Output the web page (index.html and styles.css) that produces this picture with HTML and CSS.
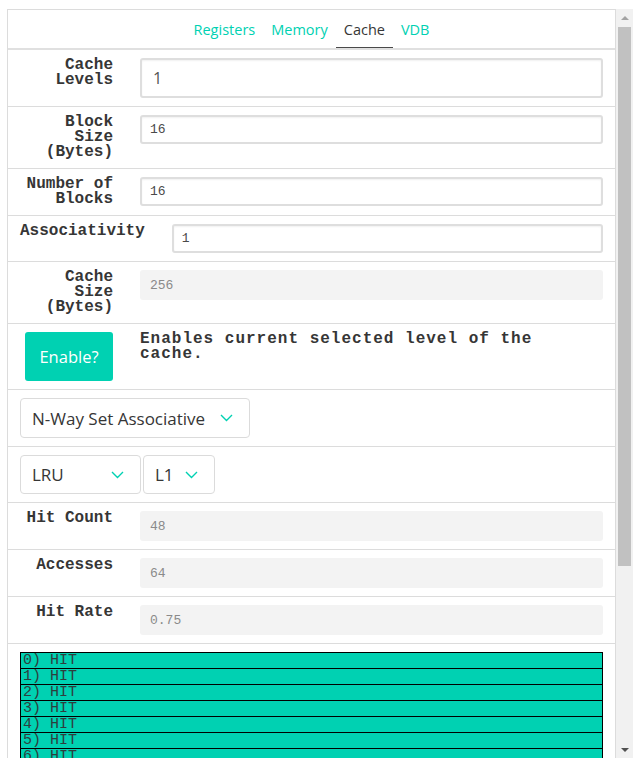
FILE: index.html
```html
<!DOCTYPE html>
<html>
<head>
<meta charset="utf-8">
<link rel="stylesheet" href="styles.css">
</head>
<body>
<div class="frame">
  <div class="panel">
    <nav class="tabs">
      <a class="tab">Registers</a>
      <a class="tab">Memory</a>
      <a class="tab active">Cache</a>
      <a class="tab">VDB</a>
    </nav>

    <div class="row">
      <div class="flabel">Cache Levels</div>
      <div class="fbody"><input class="inp inp-big" type="text" value="1"></div>
    </div>
    <div class="row">
      <div class="flabel">Block Size (Bytes)</div>
      <div class="fbody"><input class="inp" type="text" value="16"></div>
    </div>
    <div class="row">
      <div class="flabel">Number of Blocks</div>
      <div class="fbody"><input class="inp" type="text" value="16"></div>
    </div>
    <div class="row">
      <div class="flabel">Associativity</div>
      <div class="fbody"><input class="inp" type="text" value="1"></div>
    </div>
    <div class="row">
      <div class="flabel">Cache Size (Bytes)</div>
      <div class="fbody"><input class="inp inp-off" type="text" value="256" disabled></div>
    </div>
    <div class="row">
      <div class="flabel"><button class="btn">Enable?</button></div>
      <div class="fbody"><p class="desc">Enables current selected level of the cache.</p></div>
    </div>
    <div class="row row-sel">
      <div class="sel sel-type"><span>N-Way Set Associative</span><svg class="chev" width="13" height="8" viewBox="0 0 13 8"><polyline points="1,1 6.5,6.5 12,1" fill="none" stroke="#00d1b2" stroke-width="1.4"/></svg></div>
    </div>
    <div class="row row-sel">
      <div class="sel sel-policy"><span>LRU</span><svg class="chev" width="13" height="8" viewBox="0 0 13 8"><polyline points="1,1 6.5,6.5 12,1" fill="none" stroke="#00d1b2" stroke-width="1.4"/></svg></div>
      <div class="sel sel-level"><span>L1</span><svg class="chev" width="13" height="8" viewBox="0 0 13 8"><polyline points="1,1 6.5,6.5 12,1" fill="none" stroke="#00d1b2" stroke-width="1.4"/></svg></div>
    </div>
    <div class="row">
      <div class="flabel">Hit Count</div>
      <div class="fbody"><input class="inp inp-off" type="text" value="48" disabled></div>
    </div>
    <div class="row">
      <div class="flabel">Accesses</div>
      <div class="fbody"><input class="inp inp-off" type="text" value="64" disabled></div>
    </div>
    <div class="row">
      <div class="flabel">Hit Rate</div>
      <div class="fbody"><input class="inp inp-off" type="text" value="0.75" disabled></div>
    </div>
    <div class="row row-list">
      <div class="hits">
        <div class="hit">0) HIT</div>
        <div class="hit">1) HIT</div>
        <div class="hit">2) HIT</div>
        <div class="hit">3) HIT</div>
        <div class="hit">4) HIT</div>
        <div class="hit">5) HIT</div>
        <div class="hit">6) HIT</div>
      </div>
    </div>
  </div>
  <div class="scrollbar">
    <div class="sb-btn"><span class="arrow-up"></span></div>
    <div class="sb-track"><div class="sb-thumb"></div></div>
    <div class="sb-btn"><span class="arrow-down"></span></div>
  </div>
</div>
</body>
</html>
```
FILE: styles.css
```css
html, body {
  margin: 0;
  padding: 0;
  background: #fff;
}
body {
  padding: 9px 0 0 7px;
  font-family: "Open Sans", "Noto Sans", sans-serif;
  color: #363636;
}
.frame {
  display: flex;
  width: 626px;
  height: 749px;
}
.panel {
  flex: 1 1 auto;
  min-width: 0;
  overflow: hidden;
  border: 1px solid #dcdcdc;
  border-bottom: none;
}
.scrollbar {
  flex: 0 0 17px;
  display: flex;
  flex-direction: column;
  background: #f1f1f1;
}
.sb-btn {
  flex: 0 0 17px;
  display: flex;
  align-items: center;
  justify-content: center;
}
.arrow-up {
  width: 0;
  height: 0;
  border-left: 4px solid transparent;
  border-right: 4px solid transparent;
  border-bottom: 4px solid #a3a3a3;
}
.arrow-down {
  width: 0;
  height: 0;
  border-left: 4px solid transparent;
  border-right: 4px solid transparent;
  border-top: 4px solid #505050;
}
.sb-track {
  flex: 1 1 auto;
  padding: 1px 2px 0;
}
.sb-thumb {
  height: 539px;
  background: #c1c1c1;
}
.tabs {
  display: flex;
  justify-content: center;
  border-bottom: 2px solid #e0e0e0;
  height: 38px;
}
.tab {
  display: block;
  padding: 2px 8px 0;
  line-height: 36px;
  font-size: 14.5px;
  color: #00d1b2;
  box-sizing: border-box;
  height: 38px;
}
.tab.active {
  color: #363636;
  border-bottom: 1px solid #4a4a4a;
}
.row {
  display: flex;
  align-items: flex-start;
  gap: 27px;
  padding: 8px 12px;
  border-bottom: 1px solid #dcdcdc;
}
.flabel {
  flex: 0 0 93px;
  text-align: right;
  font-family: "Liberation Mono", "Courier New", monospace;
  font-weight: bold;
  font-size: 16px;
  line-height: 15px;
  color: #363636;
}
.fbody {
  flex: 1 1 0;
  min-width: 0;
}
.inp {
  display: block;
  box-sizing: border-box;
  width: 100%;
  height: 29px;
  margin: 0;
  padding: 0 8px;
  border: 2px solid #dedede;
  border-radius: 3px;
  background: #fff;
  box-shadow: inset 0 1px 2px rgba(10, 10, 10, 0.06);
  font-family: "Liberation Mono", "Courier New", monospace;
  font-size: 13px;
  color: #4a4a4a;
  outline: none;
}
.inp-big {
  height: 40px;
  padding: 0 11px;
  font-family: "Open Sans", sans-serif;
  font-size: 16px;
  color: #555;
}
.inp-off {
  height: 30px;
  border: none;
  padding: 0 10px;
  background: #f3f3f3;
  box-shadow: none;
  color: #8a8a8a;
}
.btn {
  display: inline-block;
  width: 88px;
  height: 49px;
  margin: 0;
  padding: 0;
  border: none;
  border-radius: 3px;
  background: #00d1b2;
  color: #fff;
  font-family: "Open Sans", sans-serif;
  font-size: 16.5px;
}
.desc {
  margin: 0;
  font-family: "Liberation Mono", "Courier New", monospace;
  font-weight: bold;
  font-size: 16px;
  letter-spacing: 1px;
  line-height: 15px;
  color: #363636;
}
.row-sel {
  gap: 2px;
}
.sel {
  display: flex;
  align-items: center;
  box-sizing: border-box;
  height: 39px;
  padding: 0 16px 0 11px;
  border: 1px solid #dbdbdb;
  border-radius: 4px;
  font-size: 17px;
  color: #363636;
  background: #fff;
}
.sel span {
  flex: 1 1 auto;
}
.chev {
  display: block;
  flex: 0 0 auto;
}
.sel-type {
  width: 230px;
  height: 40px;
}
.sel-policy {
  width: 121px;
}
.sel-level {
  width: 72px;
}
.row-list {
  display: block;
  border-bottom: none;
}
.hits {
  border-top: 1px solid #000;
}
.hit {
  height: 15px;
  border: 1px solid #000;
  border-top: none;
  background: #00d1b2;
  font-family: "Liberation Mono", "Courier New", monospace;
  font-size: 15px;
  line-height: 15px;
  padding-left: 2px;
  color: #2e3e3e;
  white-space: pre;
}
```
